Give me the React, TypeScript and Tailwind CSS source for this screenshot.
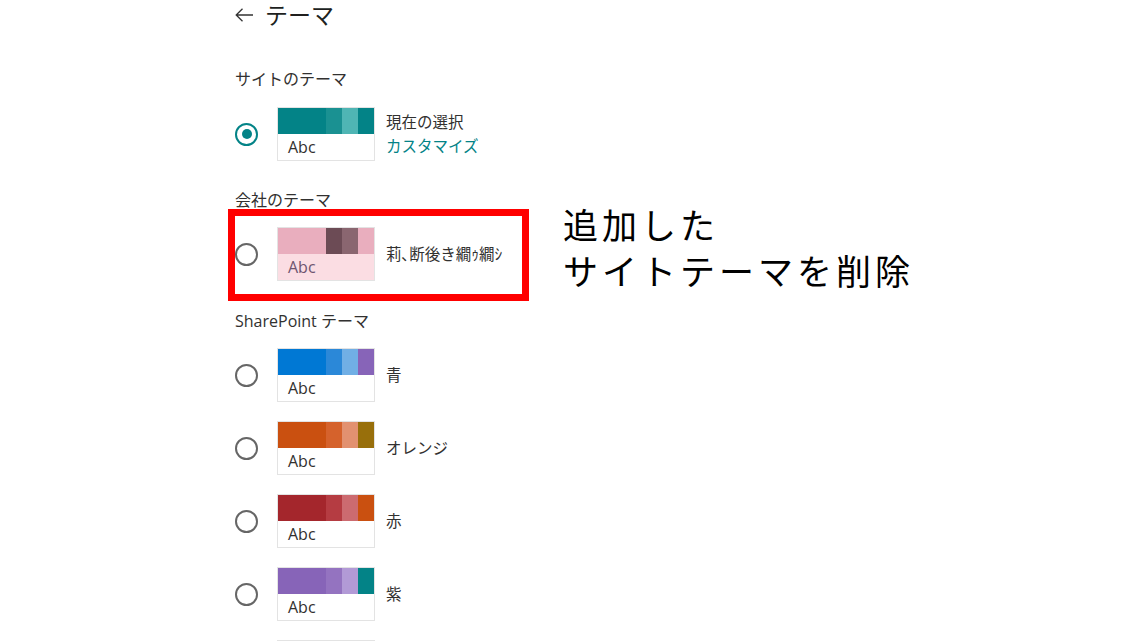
import React from "react"

interface Theme {
  name: string
  band: string[]
  body?: string
  abc?: string
}

const sharepointThemes: Theme[] = [
  { name: "青", band: ["#0078d4", "#2b88d8", "#71afe5", "#8764b8"] },
  { name: "オレンジ", band: ["#ca5010", "#d5622c", "#e29170", "#986f0b"] },
  { name: "赤", band: ["#a4262c", "#b53c42", "#cc6b70", "#ca5010"] },
  { name: "紫", band: ["#8764b8", "#9473c0", "#b29ad6", "#038387"] },
]

function Radio({ checked }: { checked?: boolean }) {
  return (
    <div
      className={`w-[23px] h-[23px] shrink-0 rounded-full border-2 flex items-center justify-center ${checked ? "border-[#038387]" : "border-[#666666]"}`}
    >
      {checked && <div className="w-[10px] h-[10px] rounded-full bg-[#038387]" />}
    </div>
  )
}

function Swatch({ theme }: { theme: Theme }) {
  const widths = ["w-[48px]", "w-[16px]", "w-[16px]", "w-[16px]"]
  return (
    <div className="ml-[19px] w-[98px] h-[54px] shrink-0 border border-[#e3e3e3] flex flex-col">
      <div className="h-[26px] flex">
        {theme.band.map((c, i) => (
          <div key={i} className={`${widths[i]} h-full`} style={{ backgroundColor: c }} />
        ))}
      </div>
      <div
        className="flex-1 flex items-center pl-[10px] text-[16px]"
        style={{ backgroundColor: theme.body ?? "#ffffff", color: theme.abc ?? "#323130" }}
      >
        Abc
      </div>
    </div>
  )
}

function ThemeRow({ theme, checked, children }: { theme: Theme; checked?: boolean; children?: React.ReactNode }) {
  return (
    <div className="flex items-center">
      <Radio checked={checked} />
      <Swatch theme={theme} />
      <div className="ml-[11px] text-[15.5px] leading-[24px] text-[#323130]">{children ?? theme.name}</div>
    </div>
  )
}

export default function App() {
  return (
    <div
      className="w-[1141px] h-[641px] overflow-hidden bg-white flex"
      style={{ fontFamily: "'Open Sans', 'Noto Sans CJK JP', sans-serif" }}
    >
      <div className="ml-[235px] w-[294px] shrink-0 flex flex-col">
        <div className="h-[30px] flex items-center gap-[12px] text-[#201f1e]">
          <svg width="18" height="14" viewBox="0 0 18 14" fill="none" stroke="#333333" strokeWidth="1.3">
            <path d="M1 7h17M7.5 0.8L1.2 7l6.3 6.2" />
          </svg>
          <span className="text-[23px] leading-[30px]">テーマ</span>
        </div>

        <div className="mt-[38px] text-[16px] leading-[22px] text-[#323130]">サイトのテーマ</div>
        <div className="mt-[17px]">
          <ThemeRow theme={{ name: "", band: ["#038387", "#1a9192", "#4fb5b4", "#038387"] }} checked>
            <div>現在の選択</div>
            <div className="text-[#038387]">カスタマイズ</div>
          </ThemeRow>
        </div>

        <div className="mt-[28px] text-[16px] leading-[22px] text-[#323130]">会社のテーマ</div>
        <div className="relative mt-[16px]">
          <ThemeRow
            theme={{
              name: "莉､断後き繝ｩ繝ｼ",
              band: ["#e9aebe", "#6c4b55", "#8a6670", "#e9aebe"],
              body: "#fbdde3",
              abc: "#6e5570",
            }}
          />
          <div className="absolute -left-[7px] right-0 -top-[18px] -bottom-[20px] border-[7px] border-[#ff0000]" />
        </div>

        <div className="mt-[29px] text-[16px] leading-[22px] text-[#323130]">SharePoint テーマ</div>
        <div className="mt-[16px] flex flex-col gap-[19px]">
          {sharepointThemes.map((t) => (
            <ThemeRow key={t.name} theme={t} />
          ))}
          <div className="ml-[42px] w-[98px] h-[20px] border border-[#e3e3e3]" />
        </div>
      </div>

      <div className="ml-[34px] pt-[203px] text-[35px] leading-[46px] tracking-[4px] text-black">
        追加した
        <br />
        サイトテーマを削除
      </div>
    </div>
  )
}
